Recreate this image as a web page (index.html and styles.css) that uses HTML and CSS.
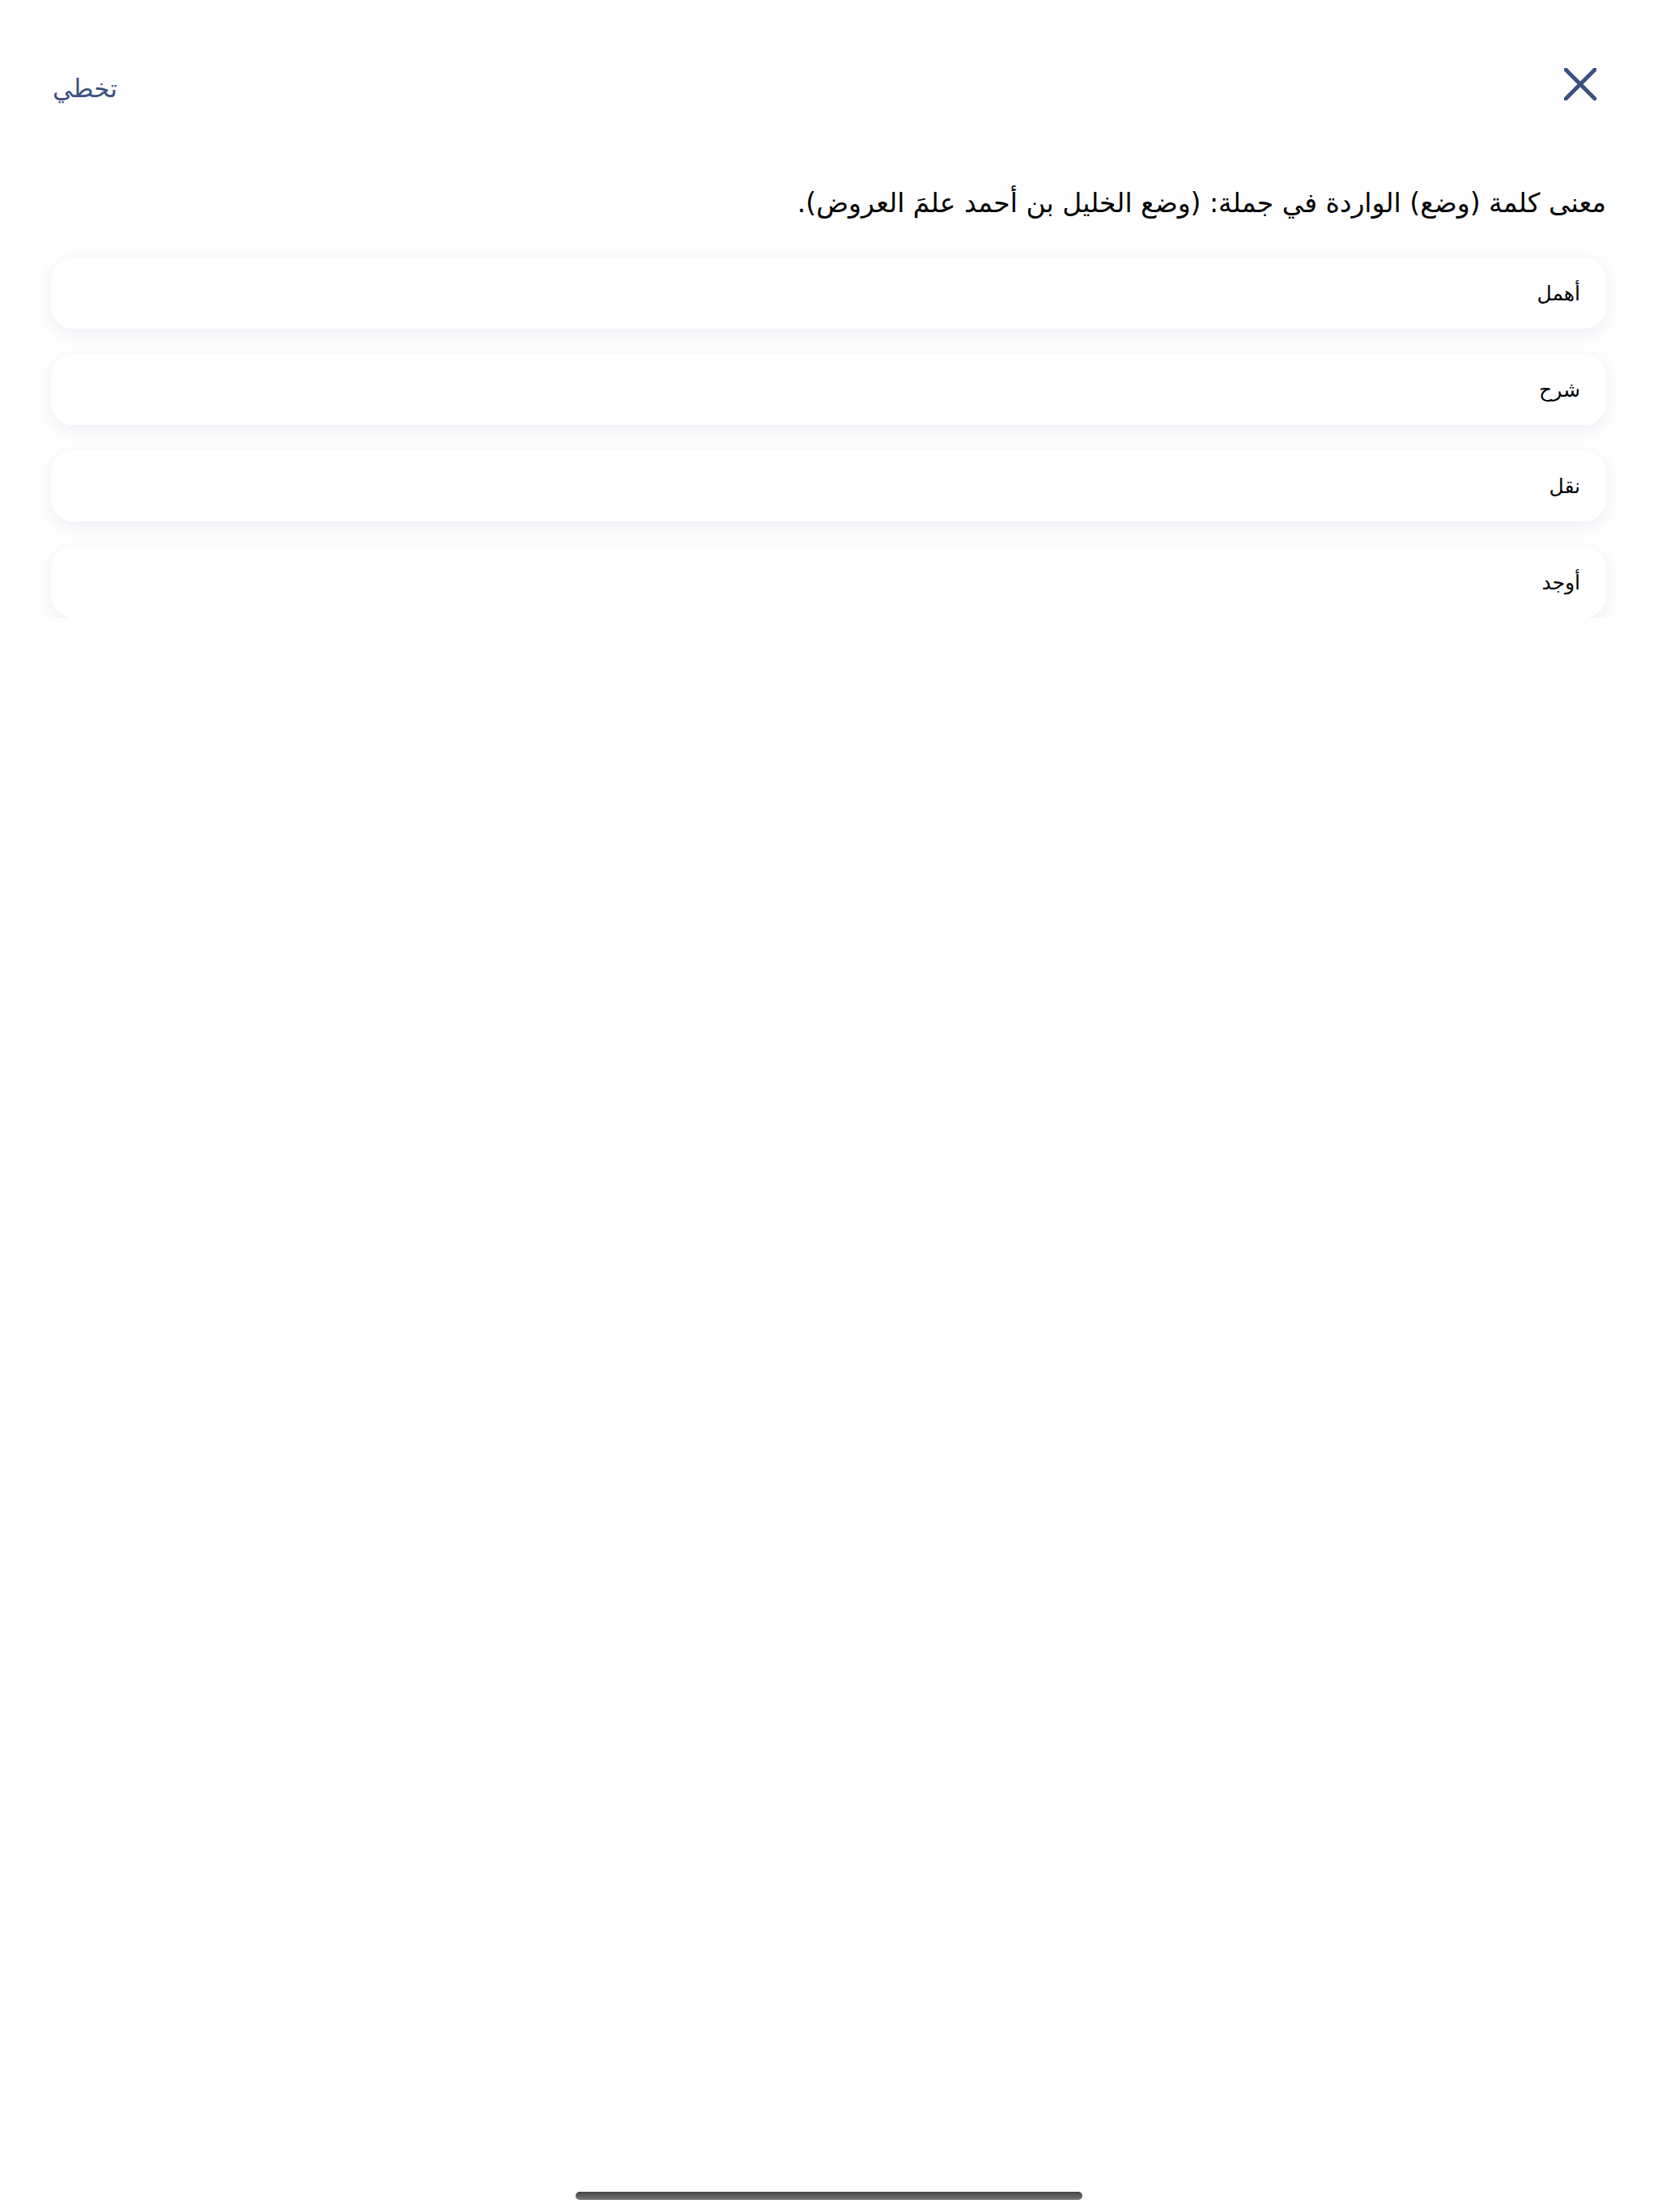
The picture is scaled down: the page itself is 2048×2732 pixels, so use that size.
FILE: index.html
```html
<!DOCTYPE html>
<html lang="ar" dir="rtl">

<head>
  <meta charset="UTF-8">
  <meta name="viewport" content="width=device-width, initial-scale=1.0">
  <title>سؤال</title>
  <link rel="stylesheet" href="styles.css">
</head>

<body>
  <div class="screen">
    <div class="top-bar">
      <button class="close-btn" aria-label="إغلاق">
        <svg width="40" height="40" viewBox="0 0 40 40">
          <path d="M2 2 L38 38 M38 2 L2 38" stroke="#3b5180" stroke-width="5" stroke-linecap="round" fill="none" />
        </svg>
      </button>
      <button class="skip-btn">تخطي</button>
    </div>

    <p class="question">معنى كلمة (وضع) الواردة في جملة: (وضع الخليل بن أحمد علمَ العروض).</p>

    <div class="answers">
      <div class="answer">أهمل</div>
      <div class="answer">شرح</div>
      <div class="answer">نقل</div>
      <div class="answer">أوجد</div>
    </div>
  </div>
  <div class="home-bar"></div>
</body>

</html>
```

FILE: styles.css
```css
body {
  margin: 0;
  background: #fefefe;
  font-family: "DejaVu Sans", sans-serif;
  color: #000;
}

.screen {
  padding: 84px 64px 0 63px;
}

.top-bar {
  display: flex;
  justify-content: space-between;
  align-items: center;
  height: 40px;
}

.close-btn {
  width: 40px;
  height: 40px;
  margin-right: 12px;
  padding: 0;
  border: 0;
  background: none;
  cursor: pointer;
}

.close-btn svg {
  display: block;
}

.skip-btn {
  padding: 10px 0 0;
  margin-left: 2px;
  border: 0;
  background: none;
  color: #3b5180;
  font-family: "DejaVu Sans", sans-serif;
  font-size: 31px;
  cursor: pointer;
}

.question {
  margin: 102px 0 0;
  font-size: 33px;
  line-height: 50px;
}

.answers {
  display: flex;
  flex-direction: column;
  gap: 31px;
  margin-top: 42px;
}

.answer {
  height: 88px;
  display: flex;
  align-items: center;
  padding: 0 32px;
  background: #fff;
  border-radius: 27px;
  box-shadow: 0 6px 20px rgba(40, 70, 120, 0.08);
  font-size: 25px;
}

/* ios home indicator */
.home-bar {
  position: fixed;
  bottom: 15px;
  left: 50%;
  width: 626px;
  height: 10px;
  margin-left: -313px;
  border-radius: 5px;
  background: linear-gradient(#444, #777);
}
```
